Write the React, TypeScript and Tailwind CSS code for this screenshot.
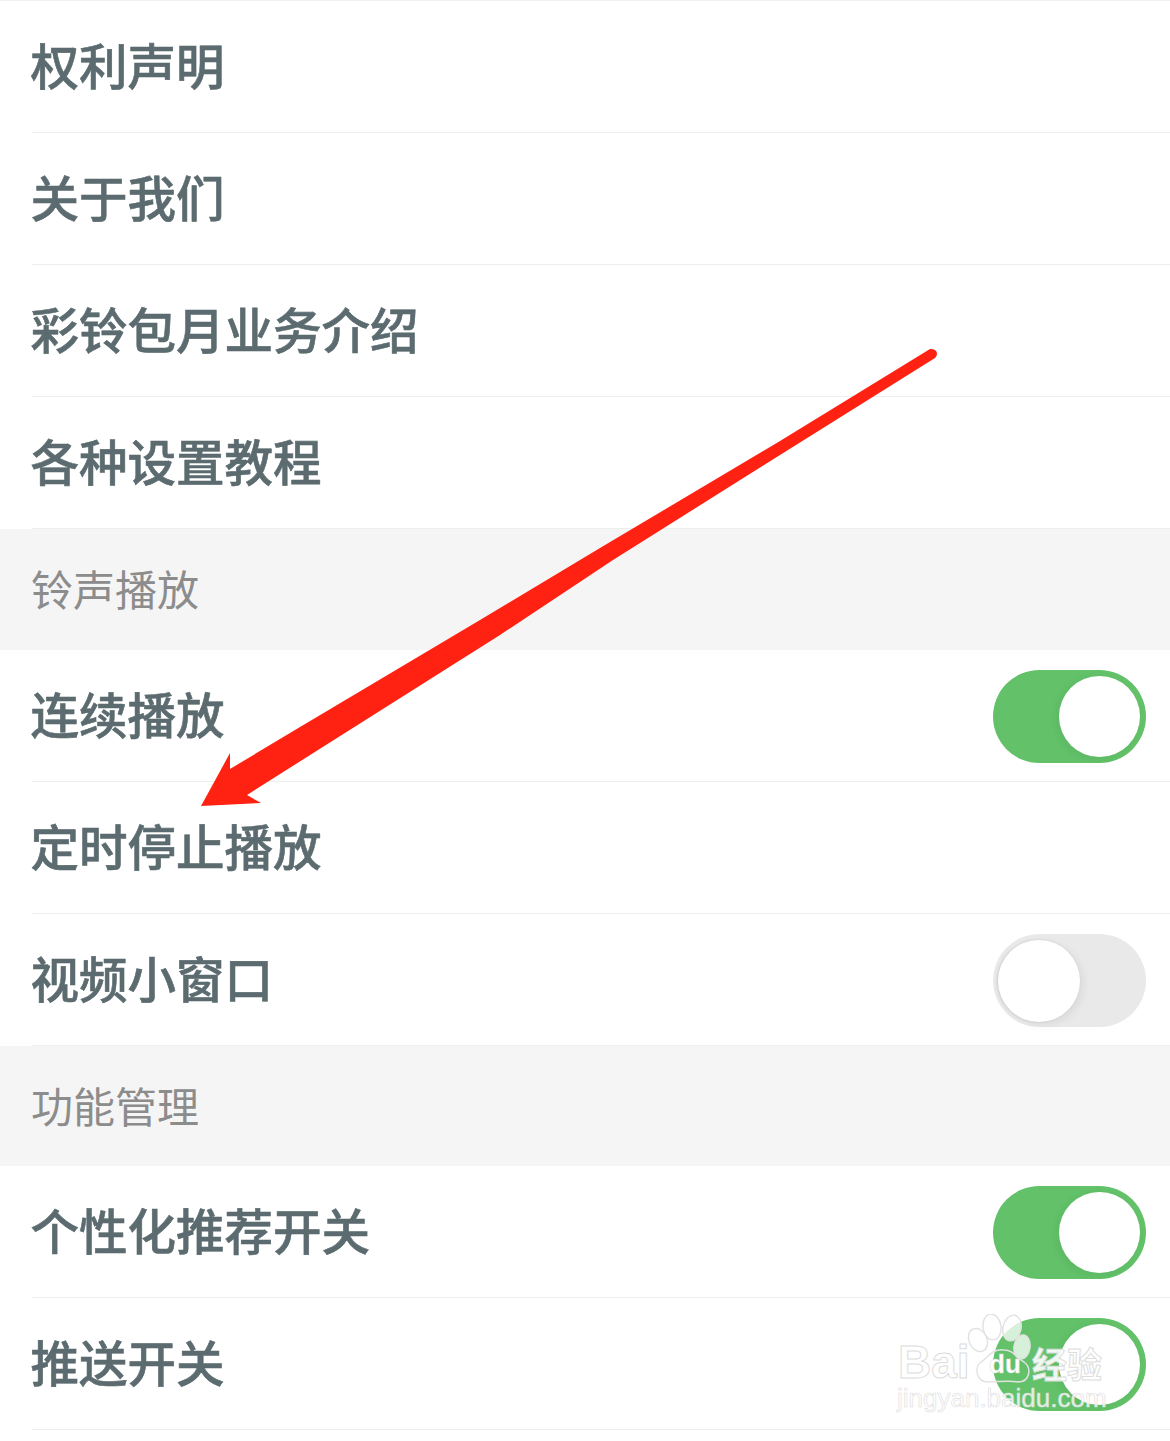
const font = { fontFamily: '"Noto Sans CJK SC", "Noto Sans", sans-serif' };

function Toggle({ on }: { on: boolean }) {
  if (on) {
    return (
      <div className="mt-[2px] flex h-[93px] w-[153px] shrink-0 items-center justify-end rounded-full bg-[#62c169] pr-[6px]">
        <div className="h-[81px] w-[81px] rounded-full bg-white shadow-[-3px_2px_8px_rgba(0,0,0,0.05)]" />
      </div>
    );
  }
  return (
    <div className="mt-[2px] flex h-[93px] w-[153px] shrink-0 items-center justify-start rounded-full bg-[#e9e9e9] pl-[5px]">
      <div className="h-[82px] w-[82px] rounded-full bg-white shadow-[-1px_0_3px_rgba(0,0,0,0.12),4px_3px_8px_rgba(0,0,0,0.06)]" />
    </div>
  );
}

function Row({ label, toggle }: { label: string; toggle?: boolean }) {
  return (
    <div className="h-[132px] bg-white pl-[32px]">
      <div className="flex h-full items-center justify-between border-b border-[#eeeeee] pr-[24px]">
        <span className="-ml-[1.5px] pb-[4px] text-[48.5px] leading-none font-medium text-[#5b6b6f] [-webkit-text-stroke:0.6px_#5b6b6f]">
          {label}
        </span>
        {toggle !== undefined && <Toggle on={toggle} />}
      </div>
    </div>
  );
}

function Section({ label, height }: { label: string; height: string }) {
  return (
    <div className={`flex items-center bg-[#f5f5f5] pb-[3px] pl-[31px] ${height}`}>
      <span className="text-[42px] leading-none text-[#8c8c8c]">{label}</span>
    </div>
  );
}

function Arrow() {
  return (
    <svg className="pointer-events-none absolute top-0 left-0" width="1170" height="1441" viewBox="0 0 1170 1441">
      <path
        d="M930 349 Q937 349 937 354 Q937 356 935 358 L780 455 L613 560 L500 635 L318 750 L247 795 L261 803 L201 806 L230 753 L230 769 L300 727 L480 620 L600 548 L780 441 Z"
        fill="#ff2213"
      />
    </svg>
  );
}

function Watermark() {
  return (
    <div className="pointer-events-none absolute top-[1314px] left-[896px] h-[104px] w-[214px]">
      <svg className="absolute top-0 left-0" width="214" height="104" viewBox="0 0 214 104">
        <g fill="#ffffff" fillOpacity="0.75" stroke="#e2e2e2" strokeWidth="1.5">
          <ellipse cx="82" cy="26" rx="9" ry="12" transform="rotate(-25 82 26)" />
          <ellipse cx="96" cy="13" rx="9" ry="13" transform="rotate(-8 96 13)" />
          <ellipse cx="116" cy="14" rx="9" ry="13" transform="rotate(12 116 14)" />
          <ellipse cx="126" cy="33" rx="8" ry="12" transform="rotate(8 126 33)" />
        </g>
        <path
          d="M108 36 C96 34 92 44 85 48 C78 53 80 68 92 68 C100 68 114 66 122 68 C134 68 136 54 128 48 C120 44 118 36 108 36 Z"
          fill="none"
          stroke="#e2e2e2"
          strokeWidth="1.5"
        />
      </svg>
      <span className="absolute top-[25px] left-[2px] font-['Liberation_Sans'] text-[46px] leading-none font-bold text-white/70 [-webkit-text-stroke:1px_#dddddd]">
        Bai
      </span>
      <span className="absolute top-[37px] left-[93px] font-['Liberation_Sans'] text-[26px] leading-none font-bold text-white [-webkit-text-stroke:0.5px_#dddddd]">
        du
      </span>
      <span className="absolute top-[31px] left-[136px] text-[35px] leading-none font-bold text-white/90 [-webkit-text-stroke:1px_#dddddd]">
        经验
      </span>
      <span className="absolute top-[71px] left-px font-['Liberation_Sans'] text-[26px] leading-none text-white/80 [-webkit-text-stroke:0.6px_#dddddd]">
        jingyan.baidu.com
      </span>
    </div>
  );
}

export default function App() {
  return (
    <div className="relative h-[1441px] w-[1170px] overflow-hidden bg-white" style={font}>
      <div className="h-px bg-[#f0f0f0]" />
      <Row label="权利声明" />
      <Row label="关于我们" />
      <Row label="彩铃包月业务介绍" />
      <Row label="各种设置教程" />
      <Section label="铃声播放" height="h-[121px]" />
      <Row label="连续播放" toggle={true} />
      <Row label="定时停止播放" />
      <Row label="视频小窗口" toggle={false} />
      <Section label="功能管理" height="h-[120px]" />
      <Row label="个性化推荐开关" toggle={true} />
      <Row label="推送开关" toggle={true} />
      <Arrow />
      <Watermark />
    </div>
  );
}
